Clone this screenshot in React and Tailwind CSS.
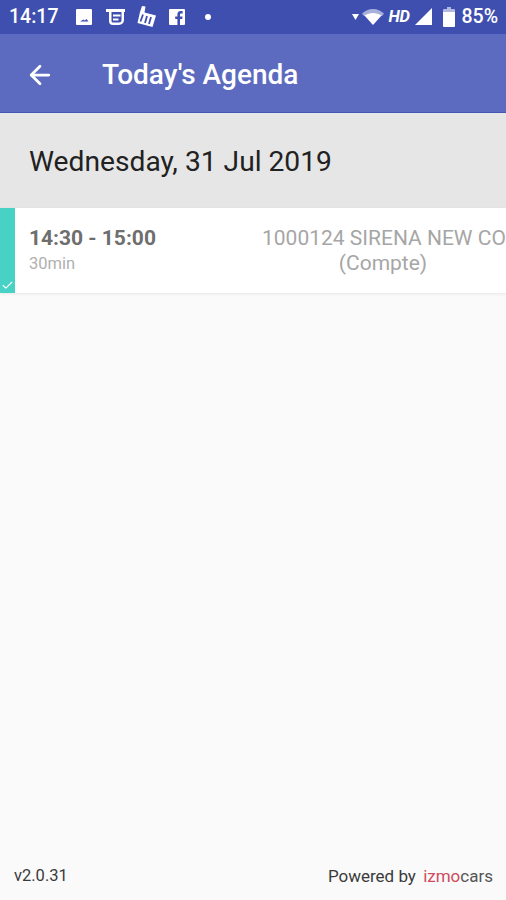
import React from 'react';
import { ArrowLeft, Check } from 'lucide-react';

function StatusIcons() {
  return (
    <div className="flex items-center text-white">
      <svg width="18" height="18" viewBox="0 0 18 18" className="ml-[17px]">
        <path fill="#fff" fillRule="evenodd" d="M2 1h14a1 1 0 0 1 1 1v14a1 1 0 0 1-1 1H2a1 1 0 0 1-1-1V2a1 1 0 0 1 1-1zM5 13.500h8.500l-2-2.500-1.700 1.600-1.300-1z" />
      </svg>
      <svg width="19" height="18" viewBox="0 0 19 18" className="ml-[13px]">
        <path fill="#fff" fillRule="evenodd" d="M0 1h19v3h-1v8a5 5 0 0 1-5 5H7a4 4 0 0 1-4-4V4H0zM5.500 4v9a1.500 1.500 0 0 0 1.500 1.500h6a2.500 2.500 0 0 0 2.500-2.500V4z" />
        <path fill="#fff" d="M7 6.500h7.500v2H7zM7 10.500h5.500v2H7z" />
      </svg>
      <svg width="22" height="24" viewBox="0 0 22 24" className="ml-[10px]">
        <path fill="#fff" d="M5 7l2-6 3.500.5-1 6 11.500 3-3.500 11.500-15-4z" />
        <path fill="none" stroke="#3f4fb0" strokeWidth="1.800" d="M8 9.500l-2.500 7M12 11l-2 7M16 12l-2 7" />
      </svg>
      <svg width="18" height="18" viewBox="0 0 18 18" className="ml-[11px]">
        <path fill="#fff" fillRule="evenodd" d="M2 1h14a1 1 0 0 1 1 1v14a1 1 0 0 1-1 1h-4v-6h2.200l.4-2.600H12V6.800c0-.8.300-1.300 1.300-1.300h1.400V3.200c-.5 0-1.200-.2-2-.2-2 0-3.300 1.200-3.300 3.400v2H7.200V11h2.200v6H2a1 1 0 0 1-1-1V2a1 1 0 0 1 1-1z" />
      </svg>
      <span className="ml-[19px] h-[6px] w-[6px] rounded-full bg-white" />
    </div>
  );
}

function StatusRight() {
  return (
    <div className="flex items-center text-white">
      <svg width="7" height="6" viewBox="0 0 7 6">
        <path fill="#fff" d="M0 0h7L3.500 6z" />
      </svg>
      <svg width="22" height="18" viewBox="0 0 22 18" className="ml-[3px]">
        <path fill="#fff" fillOpacity="0.55" d="M0 5.500C3 2.800 6.800 1 11 1s8 1.800 11 4.500l-2 2.500H2z" />
        <path fill="#fff" d="M2.500 7.500C5 6 8 5 11 5s6 1 8.500 2.500L11 17z" />
      </svg>
      <span className="ml-[5px] text-[16.500px] leading-none font-bold italic tracking-tight">HD</span>
      <svg width="18" height="18" viewBox="0 0 18 18" className="ml-[6px]">
        <path fill="#fff" d="M0 17L17 0v17z" />
      </svg>
      <svg width="12" height="20" viewBox="0 0 12 20" className="ml-[10px]">
        <path fill="#fff" fillOpacity="0.6" d="M4 0h4v2h3a1 1 0 0 1 1 1v3H0V3a1 1 0 0 1 1-1h3z" />
        <path fill="#fff" d="M0 5h12v14a1 1 0 0 1-1 1H1a1 1 0 0 1-1-1z" />
      </svg>
      <span className="ml-[6px] text-[19.500px] leading-none font-medium">85%</span>
    </div>
  );
}

export default function App() {
  return (
    <div className="flex h-[900px] flex-col overflow-hidden bg-[#fafafa] font-['Roboto',sans-serif]">
      {/* Status bar */}
      <div className="flex h-[34px] items-center justify-between bg-[#3f4fb0] pl-[9px] pr-[8px]">
        <div className="flex items-center">
          <span className="text-[19.500px] leading-none font-medium text-white">14:17</span>
          <StatusIcons />
        </div>
        <StatusRight />
      </div>

      {/* App bar */}
      <div className="flex h-[79px] items-center border-b border-[#4555b5] bg-[#5c6bc0] pt-[3px]">
        <ArrowLeft className="ml-[25px] text-white" size={30} strokeWidth={2.2} />
        <h1 className="ml-[47px] text-[28px] font-medium text-white">Today's Agenda</h1>
      </div>

      {/* Date */}
      <div className="flex h-[95px] items-center bg-[#e6e6e6] pl-[29px] pt-[3px]">
        <span className="text-[28.200px] text-[#212121]">Wednesday, 31 Jul 2019</span>
      </div>

      {/* Agenda item */}
      <div className="flex h-[85px] bg-white shadow-[0_1px_3px_rgba(0,0,0,0.08)]">
        <div className="flex w-[15px] items-end justify-center bg-[#48d2c6] pb-[1px]">
          <Check className="text-white" size={13} strokeWidth={2} />
        </div>
        <div className="flex w-[241px] flex-col pl-[14px] pt-[17px]">
          <span className="text-[21px] leading-[26px] font-bold text-[#6e6e6e]">14:30 - 15:00</span>
          <span className="text-[16.500px] leading-[25px] text-[#b0b0b0]">30min</span>
        </div>
        <div className="flex min-w-0 flex-1 flex-col items-start overflow-hidden pt-[17px] text-[21px] text-[#a6a6a6]">
          <span className="ml-[6px] whitespace-nowrap leading-[26px]">1000124 SIRENA NEW CO</span>
          <span className="w-full pl-[4px] text-center leading-[25px]">(Compte)</span>
        </div>
      </div>

      {/* Footer */}
      <div className="mt-auto flex items-center justify-between pb-[12px] pl-[14px] pr-[13px] leading-[24px] text-[#3a3a3a]">
        <span className="text-[16.500px]">v2.0.31</span>
        <span className="text-[17px]">
          Powered by <span className="ml-[3px] text-[#cf4a5a]">izmo</span>
          <span className="text-[#555555]">cars</span>
        </span>
      </div>
    </div>
  );
}
